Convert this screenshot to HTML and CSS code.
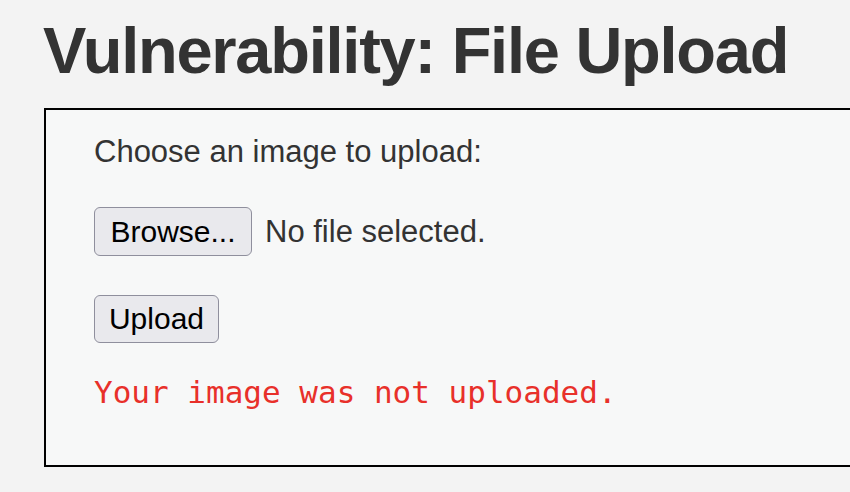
FILE: index.html
```html
<!DOCTYPE html>
<html>
<head>
<meta charset="utf-8">
<link rel="stylesheet" href="styles.css">
</head>
<body>
<div class="page">
  <h1 class="title">Vulnerability: File Upload</h1>
  <div class="vulnerable-code">
    <form class="upload-form">
      <p class="label">Choose an image to upload:</p>
      <div class="file-row">
        <button type="button" class="btn btn-browse">Browse...</button>
        <span class="file-name">No file selected.</span>
      </div>
      <div class="submit-row">
        <button type="button" class="btn btn-upload">Upload</button>
      </div>
      <pre class="message">Your image was not uploaded.</pre>
    </form>
  </div>
</div>
</body>
</html>
```

FILE: styles.css
```css
html, body {
  margin: 0;
  padding: 0;
  background: #f3f3f3;
  overflow: hidden;
}

.page {
  width: 850px;
  height: 492px;
  padding-left: 44px;
  box-sizing: border-box;
  font-family: "Liberation Sans", Arial, Helvetica, sans-serif;
  color: #333333;
}

.title {
  margin: 18px 0 0 -1px;
  font-size: 65px;
  line-height: 65px;
  font-weight: bold;
  letter-spacing: -1.25px;
  color: #333333;
  white-space: nowrap;
}

.vulnerable-code {
  margin-top: 25px;
  border: 2px solid #000000;
  border-right: none;
  background: #f7f8f8;
  padding: 25px 0 55px 48px;
  box-sizing: border-box;
}

.upload-form {
  display: flex;
  flex-direction: column;
  align-items: flex-start;
}

.label {
  margin: 0;
  font-size: 31px;
  line-height: 34px;
  color: #333333;
}

.file-row {
  margin-top: 38px;
  display: flex;
  align-items: center;
  gap: 13px;
}

.btn {
  font-family: "Liberation Sans", Arial, Helvetica, sans-serif;
  font-size: 30px;
  color: #000000;
  background: #e9e9ed;
  border: 1px solid #8f8f9d;
  border-radius: 6px;
  padding: 0;
  margin: 0;
  box-sizing: border-box;
  line-height: 34px;
}

.btn-browse {
  width: 158px;
  height: 49px;
}

.btn-upload {
  width: 125px;
  height: 48px;
}

.file-name {
  font-size: 31px;
  line-height: 34px;
  color: #333333;
}

.submit-row {
  margin-top: 39px;
}

.message {
  margin: 31px 0 0 0;
  font-family: "DejaVu Sans Mono", "Liberation Mono", monospace;
  font-size: 31px;
  line-height: 36px;
  color: #e8302a;
}
```
